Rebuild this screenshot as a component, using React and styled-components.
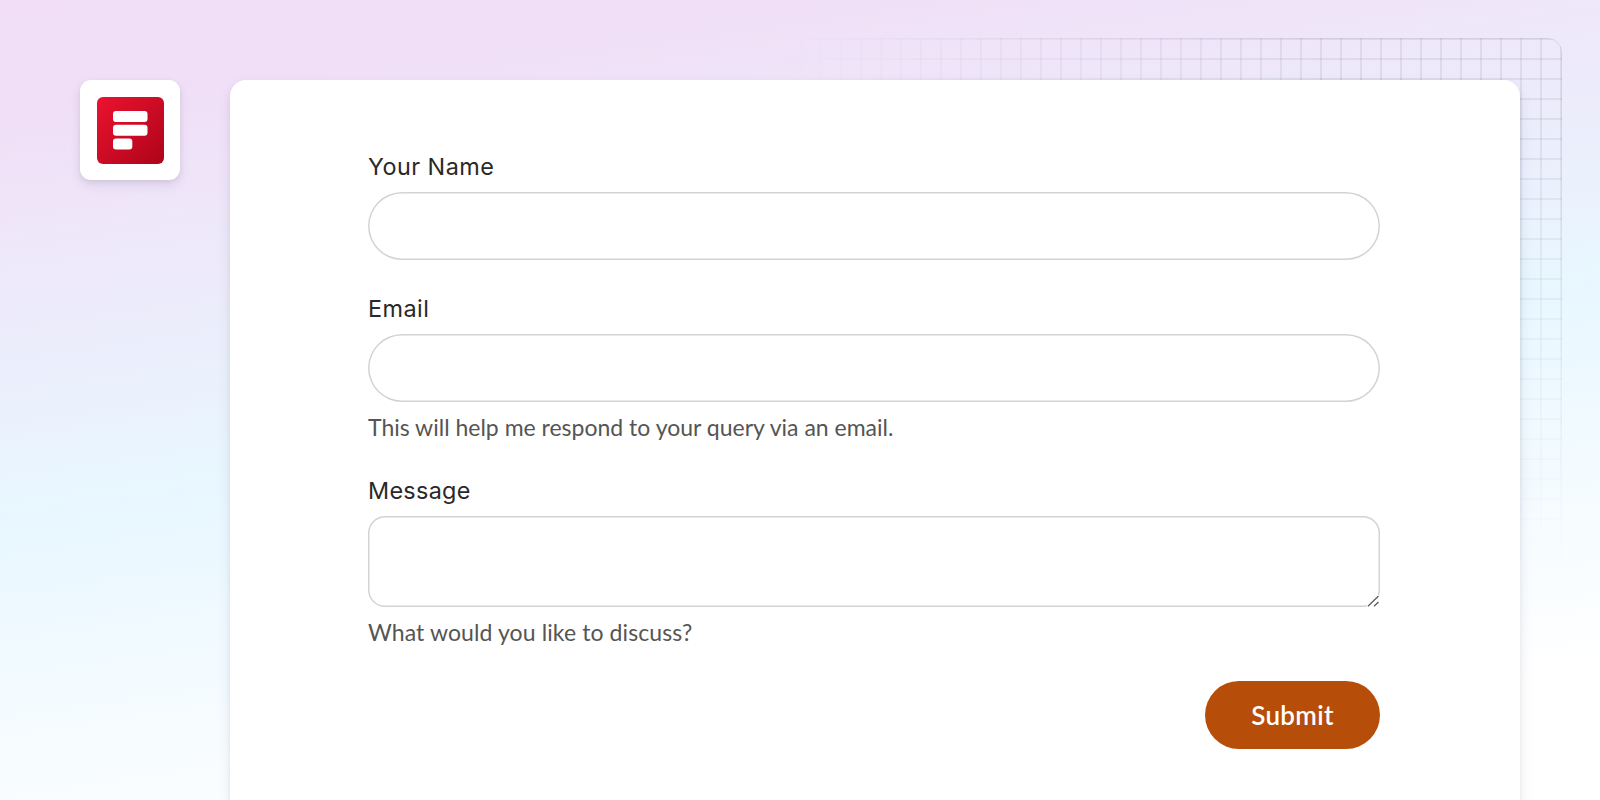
import React from 'react';
import styled, { createGlobalStyle } from 'styled-components';

const GlobalStyle = createGlobalStyle`
  *, *::before, *::after { box-sizing: border-box; }
  body { margin: 0; overflow: hidden; }
`;

const Page = styled.main`
  position: relative;
  display: flex;
  align-items: flex-start;
  gap: 50px;
  height: 800px;
  padding: 80px 80px 0;
  overflow: hidden;
  background: linear-gradient(171.6deg, #f2dff7 0%, #f1dff7 11%, #e8f7ff 50%, #ffffff 87%);
  font-family: Lato, "Liberation Sans", sans-serif;
`;

const GridPattern = styled.div`
  position: absolute;
  top: 38px;
  right: 38px;
  width: 802px;
  height: 542px;
  border-radius: 0 14px 0 0;
  box-shadow: inset -1px 1px 0 rgba(90, 90, 110, 0.09);
  background-image:
    linear-gradient(to right, rgba(90, 90, 110, 0.1) 2px, transparent 2px),
    linear-gradient(to bottom, rgba(90, 90, 110, 0.1) 2px, transparent 2px);
  background-size: 20px 20px;
  mask-image: linear-gradient(to bottom, #000 0%, #000 15%, transparent 98%),
    linear-gradient(to left, #000 0%, #000 30%, transparent 98%);
  mask-composite: intersect;
`;

const LogoTile = styled.div`
  position: relative;
  flex: none;
  display: grid;
  place-items: center;
  width: 100px;
  height: 100px;
  border-radius: 11px;
  background: #fff;
  box-shadow: 0 5px 12px rgba(50, 45, 80, 0.1), 0 2px 4px rgba(50, 45, 80, 0.08);
`;

const Card = styled.section`
  position: relative;
  flex: 1;
  height: 760px;
  padding: 69px 140px 0 138px;
  border-radius: 16px 16px 0 0;
  background: #fff;
  box-shadow: 0 6px 14px rgba(50, 50, 80, 0.1), 0 3px 4px rgba(50, 50, 80, 0.07);
`;

const Form = styled.form`
  display: flex;
  flex-direction: column;
`;

const Field = styled.div`
  display: flex;
  flex-direction: column;
  margin-bottom: ${(p) => p.$gap}px;
`;

const Label = styled.label`
  height: 35px;
  margin-bottom: 8px;
  color: #292929;
  font: 400 23.4px/35px Inter, "Liberation Sans", sans-serif;
  letter-spacing: ${(p) => p.$tracking}px;
`;

const Input = styled.input`
  width: 100%;
  height: 68px;
  padding: 0 28px;
  border: 0;
  box-shadow: inset 0 0 0 1.5px #d3d3d3;
  border-radius: 34px;
  outline: none;
  background: #fff;
  font: inherit;
`;

const TextAreaWrap = styled.div`
  position: relative;
  height: 91px;
`;

const TextArea = styled.textarea`
  display: block;
  width: 100%;
  height: 91px;
  padding: 16px;
  border: 0;
  box-shadow: inset 0 0 0 1.5px #d3d3d3;
  border-radius: 17px;
  outline: none;
  resize: none;
  background: #fff;
  font: inherit;
`;

const ResizeGrip = styled.svg`
  position: absolute;
  right: 1px;
  bottom: 0;
  background: #fff;
`;

const Hint = styled.p`
  height: 34px;
  margin: 8px 0 0;
  color: #555;
  font-size: 23px;
  line-height: 34px;
  letter-spacing: ${(p) => p.$tracking}px;
  white-space: nowrap;
`;

const SubmitButton = styled.button`
  align-self: flex-end;
  width: 175px;
  height: 68px;
  padding: 0;
  border: 0;
  border-radius: 34px;
  background: #b64d08;
  color: #fff;
  font: 600 26px/68px Lato, "Liberation Sans", sans-serif;
  letter-spacing: 0.3px;
`;

function Logo() {
  return (
    <svg width="67" height="67" viewBox="0 0 67 67" aria-hidden="true">
      <defs>
        <linearGradient id="logoRed" x1="0" y1="0" x2="1" y2="1">
          <stop offset="0" stopColor="#ec1230" />
          <stop offset="1" stopColor="#ad0419" />
        </linearGradient>
      </defs>
      <rect width="67" height="67" rx="6" fill="url(#logoRed)" />
      <g fill="#fff">
        <rect x="16" y="14" width="34.5" height="11" rx="3" />
        <rect x="16" y="27.8" width="34.5" height="11" rx="3" />
        <rect x="16" y="41.6" width="19.3" height="11" rx="3" />
      </g>
    </svg>
  );
}

export default function App() {
  return (
    <>
      <GlobalStyle />
      <Page>
        <GridPattern />
        <LogoTile>
          <Logo />
        </LogoTile>
        <Card>
          <Form onSubmit={(e) => e.preventDefault()}>
            <Field $gap={31}>
              <Label htmlFor="name" $tracking={0.45}>Your Name</Label>
              <Input id="name" />
            </Field>
            <Field $gap={29}>
              <Label htmlFor="email" $tracking={0.45}>Email</Label>
              <Input id="email" />
              <Hint $tracking={0}>This will help me respond to your query via an email.</Hint>
            </Field>
            <Field $gap={32}>
              <Label htmlFor="message" $tracking={0.3}>Message</Label>
              <TextAreaWrap>
                <TextArea id="message" />
                <ResizeGrip width="12" height="12" viewBox="0 0 12 12" aria-hidden="true">
                  <path d="M1 11.2 11.5 1M7 11.2 11.5 7" fill="none" stroke="#5c5c5c" strokeWidth="1.3" />
                </ResizeGrip>
              </TextAreaWrap>
              <Hint $tracking={0.1}>What would you like to discuss?</Hint>
            </Field>
            <SubmitButton type="submit">Submit</SubmitButton>
          </Form>
        </Card>
      </Page>
    </>
  );
}
